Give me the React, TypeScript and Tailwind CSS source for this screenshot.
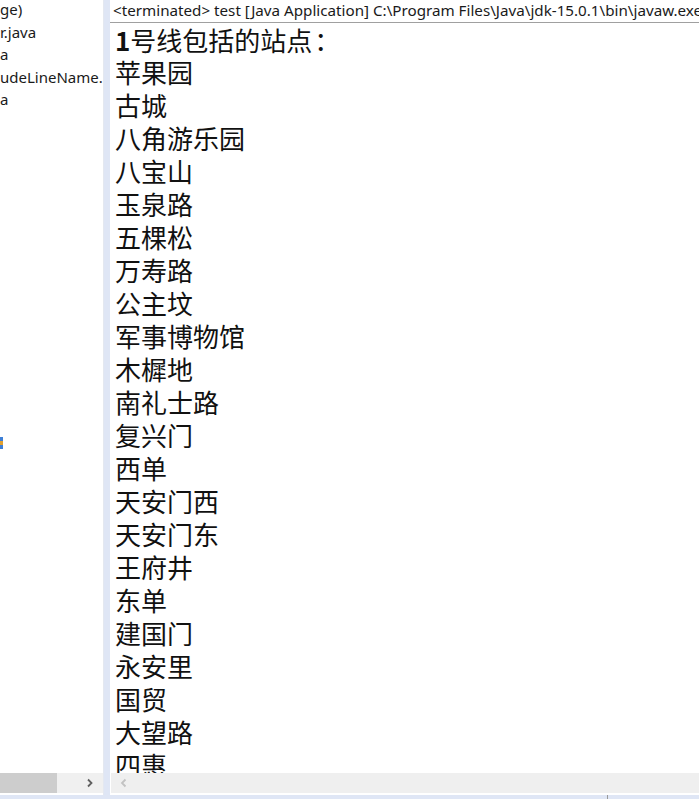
const stations = [
  '苹果园',
  '古城',
  '八角游乐园',
  '八宝山',
  '玉泉路',
  '五棵松',
  '万寿路',
  '公主坟',
  '军事博物馆',
  '木樨地',
  '南礼士路',
  '复兴门',
  '西单',
  '天安门西',
  '天安门东',
  '王府井',
  '东单',
  '建国门',
  '永安里',
  '国贸',
  '大望路',
  '四惠',
]

// package explorer is scrolled sideways, so only the tail of each name shows
const treeItems = ['ge)', 'r.java', 'a', 'udeLineName.', 'a']

const uiFont = "font-['Segoe_UI','Noto_Sans','Open_Sans',sans-serif]"
const cjkFont = "font-['Noto_Sans_CJK_SC','Noto_Sans',sans-serif]"

function LeftPane() {
  return (
    <div className="w-[104px] shrink-0 bg-white flex flex-col border-r border-[#e4e8f0]">
      <div className={`relative flex-1 overflow-hidden ${uiFont} text-[15px] text-[#1a1a1a]`}>
        <div className="flex flex-col -mt-[2px]">
          {treeItems.map((t, i) => (
            <div key={i} className="h-[22.5px] leading-[22.5px] whitespace-nowrap">
              {t}
            </div>
          ))}
        </div>
        {/* clipped tree icon */}
        <div className="absolute left-0 top-[437px] w-[3px] h-[12px] flex flex-col">
          <div className="flex-1 bg-[#3d7fd6]" />
          <div className="flex-1 bg-[#e0a030]" />
          <div className="flex-1 bg-[#3d7fd6]" />
        </div>
      </div>
      <div className="h-[20px] bg-[#f0f0f0] flex items-center">
        <div className="w-[57px] h-full bg-[#cdcdcd]" />
        <div className="flex-1" />
        <svg width="10" height="10" viewBox="0 0 10 10" className="mr-[8px]">
          <path d="M3 1.5 L6.5 5 L3 8.5" fill="none" stroke="#606060" strokeWidth="1.8" />
        </svg>
      </div>
      <div className="h-[2px] bg-white" />
    </div>
  )
}

function ConsolePane() {
  return (
    <div className="flex-1 min-w-0 bg-white flex flex-col ml-[6px]">
      <div
        className={`h-[23px] shrink-0 border-b border-[#a0a0a0] pl-[3px] ${uiFont} text-[15.2px] leading-[21px] text-[#1a1a1a] whitespace-nowrap overflow-hidden`}
      >
        {'<terminated> test [Java Application] C:\\Program Files\\Java\\jdk-15.0.1\\bin\\javaw.exe'}
      </div>
      <div className={`flex-1 overflow-hidden pl-[5px] pt-[1px] ${cjkFont} text-[26px] text-[#111]`}>
        <div className="h-[31px] leading-[31px] whitespace-nowrap">
          <span className="font-semibold">1</span>号线包括的站点<span className="ml-[2px]">：</span>
        </div>
        {stations.map((s) => (
          <div key={s} className="h-[33px] leading-[33px] whitespace-nowrap">
            {s}
          </div>
        ))}
      </div>
      <div className="h-[20px] shrink-0 bg-[#efefef] flex items-center ml-[1px]">
        <svg width="10" height="10" viewBox="0 0 10 10" className="ml-[8px]">
          <path d="M6.5 1.5 L3 5 L6.5 8.5" fill="none" stroke="#c2c2c2" strokeWidth="1.8" />
        </svg>
      </div>
      <div className="h-[2px] bg-white" />
    </div>
  )
}

export default function App() {
  return (
    <div className="w-[699px] h-[799px] bg-[#dfe6f5] flex flex-col overflow-hidden">
      <div className="flex flex-1 min-h-0">
        <LeftPane />
        <ConsolePane />
      </div>
      <div className="h-[4px] shrink-0 flex">
        <div className="w-[607px]" />
        <div className="w-[1px] bg-[#9a9a9a]" />
      </div>
    </div>
  )
}
